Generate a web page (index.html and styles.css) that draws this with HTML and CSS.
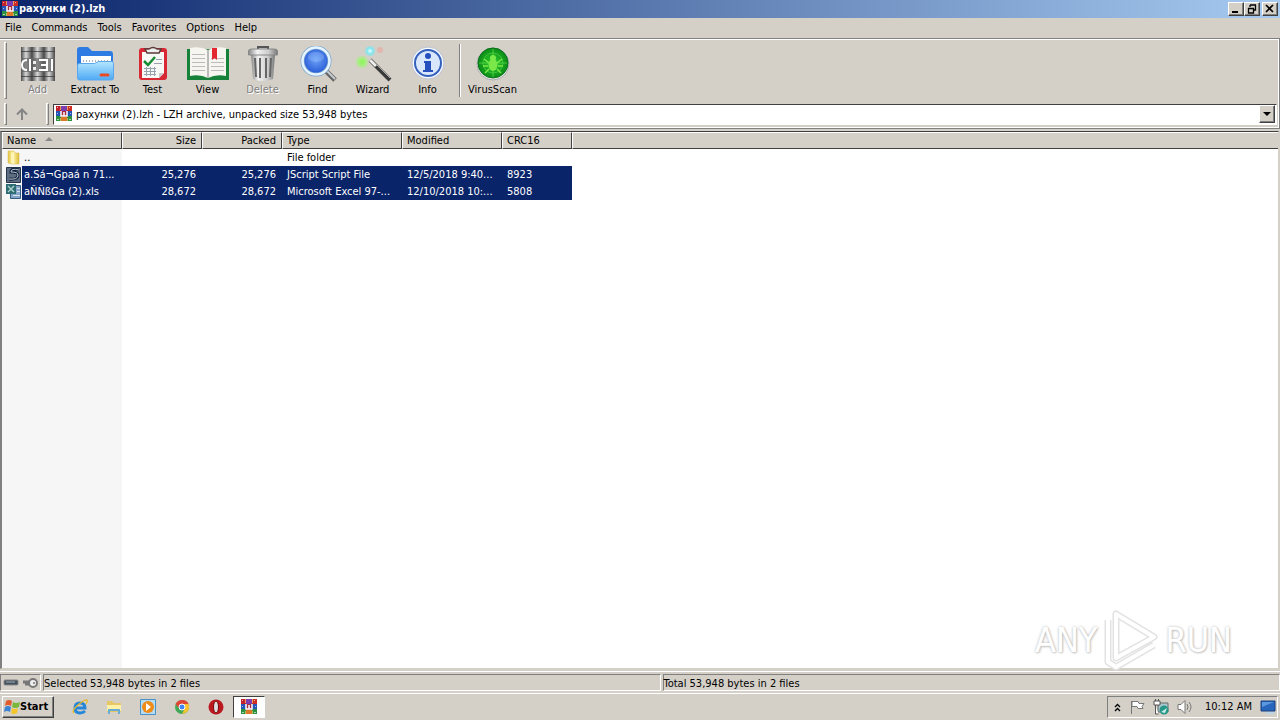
FILE: index.html
```html
<!DOCTYPE html>
<html lang="en">
<head>
<meta charset="utf-8">
<title>рахунки (2).lzh</title>
<link rel="stylesheet" href="styles.css">
</head>
<body>
<svg class="defs" aria-hidden="true">
  <defs>
    <linearGradient id="metal" x1="0" x2="1"><stop offset="0" stop-color="#4c4c4c"/><stop offset=".45" stop-color="#d8d8d8"/><stop offset="1" stop-color="#484848"/></linearGradient>
    <linearGradient id="steel" x1="0" x2="1"><stop offset="0" stop-color="#888"/><stop offset=".3" stop-color="#f2f2f2"/><stop offset=".7" stop-color="#ccc"/><stop offset="1" stop-color="#777"/></linearGradient>
    <linearGradient id="blue" x1="0" y1="0" x2="0" y2="1"><stop offset="0" stop-color="#b4e6ff"/><stop offset="1" stop-color="#4eaaf4"/></linearGradient>
    <linearGradient id="folder" x1="0" x2="1"><stop offset="0" stop-color="#e7c847"/><stop offset=".5" stop-color="#fff3a8"/><stop offset="1" stop-color="#dcb936"/></linearGradient>
    <radialGradient id="lens" cx=".5" cy=".45" r=".6"><stop offset="0" stop-color="#6ea2f8"/><stop offset="1" stop-color="#1b4fd0"/></radialGradient>
    <radialGradient id="scan"><stop offset="0" stop-color="#2fd12f"/><stop offset="1" stop-color="#0b8c17"/></radialGradient>
    <radialGradient id="glowg"><stop offset="0" stop-color="#8cf35a"/><stop offset=".5" stop-color="#a5f07c"/><stop offset="1" stop-color="#a5f07c" stop-opacity="0"/></radialGradient>
    <radialGradient id="glowb"><stop offset="0" stop-color="#eaffff"/><stop offset=".5" stop-color="#7fe6ee"/><stop offset="1" stop-color="#7fe6ee" stop-opacity="0"/></radialGradient>
    <symbol id="rar" viewBox="0 0 16 16">
      <path fill="#c4202c" d="M0 0h5v5H0z"/><path fill="#7d3bb0" d="M5 0h6v5H5z"/><path fill="#cc2c22" d="M11 0h5v5h-5z"/>
      <path fill="#2454b8" d="M0 5h5v5H0z"/><path fill="#a52c3c" d="M5 5h6v6H5z"/><path fill="#2454b8" d="M11 5h5v5h-5z"/>
      <path fill="#2b9140" d="M0 10h5v5H0z"/><path fill="#dd7829" d="M5 11h6v4H5z"/><path fill="#2b9140" d="M11 10h5v5h-5z"/>
      <path stroke="#fff" stroke-opacity=".6" d="M1 1.500h1M1 7.500h1M1 13.500h2M13 1.500h1M14 7.500h1M13 13.500h2"/>
      <path fill="none" stroke="#f2cf6d" stroke-opacity=".7" d="M4.500 0v4M11.500 0v4M4.500 12v3M11.500 12v3"/>
      <path fill="none" stroke="#fff" stroke-width="1.500" d="M5 5v5h6V5M8 6v4"/>
    </symbol>
  </defs>
</svg>
<div class="window">
  <header class="titlebar">
    <svg class="i16"><use href="#rar"/></svg>
    <h1>рахунки (2).lzh</h1>
    <div class="winbtns">
      <button aria-label="Minimize"><svg viewBox="0 0 12 10"><path d="M2 8h6" stroke="#000" stroke-width="2"/></svg></button>
      <button aria-label="Restore"><svg viewBox="0 0 12 10"><path d="M4 1h6M4 1v2M9.500 1v5H8M2 4.500h6M2.500 4v5h5V4" fill="none" stroke="#000" stroke-width="1.300"/></svg></button>
      <button class="close" aria-label="Close"><svg viewBox="0 0 12 10"><path d="M2 1l7 7M9 1L2 8" stroke="#000" stroke-width="1.700"/></svg></button>
    </div>
  </header>
  <nav class="menu">
    <button>File</button><button>Commands</button><button>Tools</button><button>Favorites</button><button>Options</button><button>Help</button>
  </nav>

  <div class="rebar">
    <div class="toolbar">
      <i class="grip"></i>
      <button class="tool" disabled>
        <svg viewBox="0 0 42 36"><rect x="4" y="1" width="11" height="34" fill="url(#metal)"/><rect x="15" y="1" width="12" height="34" fill="url(#metal)"/><rect x="27" y="1" width="11" height="34" fill="url(#metal)"/><path stroke="#333" stroke-width="1" opacity=".7" d="M4 5.500h34M4 30.500h34"/><path fill="#666" opacity=".7" d="M4 12h34v14H4z"/><path fill="none" stroke="#fff" stroke-width="2" d="M10 14q-5 0-5 5t5 5M13 13v12M22 14h8v10h-8M24 19h6M35 13v12"/><path fill="#eee" d="M16 15h3v3h-3zM16 21h3v3h-3z"/></svg>
        <span>Add</span></button>
      <button class="tool wide">
        <svg viewBox="0 0 42 36"><path fill="#2f7be4" d="M3 30V4q0-3 3-3h8l4 4h18q3 0 3 3v22z"/><path fill="#fff" d="M7 10h30v14H7z"/><path stroke="#a9b4c0" stroke-dasharray="1 2" stroke-width="2" d="M9 15h26"/><path fill="url(#blue)" stroke="#5aa6ef" d="M3.500 19.500q0-2 2-2h15l4-2h13q2 0 2 2V32q0 2-2 2h-32q-2 0-2-2z"/><path stroke="#e84b25" stroke-width="3" stroke-linecap="round" d="M27 29h7"/></svg>
        <span>Extract To</span></button>
      <button class="tool">
        <svg viewBox="0 0 42 36"><rect x="7" y="2" width="28" height="32" rx="3" fill="#d92835"/><path fill="#f7f7f5" d="M10 6h22v21l-5 5H10z"/><path fill="#c9cbd0" d="M27 32v-5h5z"/><path fill="#eee" stroke="#5b3a3a" stroke-width="1.500" d="M13 3h4q4-3 8 0h4l-2 4H15z"/><path fill="none" stroke="#168c35" stroke-width="2.500" d="M12 15l4 4 7-8"/><path stroke="#98a2ae" d="M24 13.500h6M22 17.500h8M12 22.500h12M12 25.500h12M12 28.500h12M14.500 21v9M18.500 21v9M22.500 21v9"/></svg>
        <span>Test</span></button>
      <button class="tool">
        <svg viewBox="0 0 42 36"><path fill="#168239" d="M0 3h42v31H0z"/><path fill="#f6f5ef" d="M3 2q10-2 18 2 8-4 18-2v28q-10-2-18 2-8-4-18-2z"/><path stroke="#bbb" stroke-width="2" d="M21 4v28"/><path stroke="#bbb" d="M5 8.500h13M5 12.500h13M5 16.500h13M5 20.500h13M5 24.500h13M24 12.500h13M24 16.500h13M24 20.500h13M24 24.500h13"/><path fill="#e32632" d="M25 2h5v12l-2.500-2-2.500 2z"/></svg>
        <span>View</span></button>
      <button class="tool" disabled>
        <svg viewBox="0 0 42 36"><path fill="none" stroke="#555" stroke-width="2" d="M16 3V1h10v2"/><path fill="url(#steel)" d="M9 9h24l-2 24q-10 4-20 0z"/><path fill="url(#steel)" stroke="#888" d="M6.500 5q0-2 3-2h23q3 0 3 2v4h-29z"/><path stroke="#666" stroke-width="2" d="M13 12l1 19M18 12v20M24 12v20M29 12l-1 19"/></svg>
        <span>Delete</span></button>
      <button class="tool">
        <svg viewBox="0 0 42 36"><path stroke="#666" stroke-width="5" d="M28 24l10 10"/><path stroke="#c7cdd2" stroke-width="2" d="M29 24l9 9"/><circle cx="19" cy="15" r="13.500" fill="url(#lens)" stroke="#7aa6cc" stroke-width="4"/><circle cx="19" cy="15" r="13.500" fill="none" stroke="#e6f4ff" stroke-width="2.500"/><ellipse cx="19" cy="11" rx="8" ry="5" fill="#a5ccff" opacity=".3"/></svg>
        <span>Find</span></button>
      <button class="tool">
        <svg viewBox="0 0 42 36"><circle cx="10" cy="16" r="7" fill="url(#glowg)"/><circle cx="18" cy="5" r="6" fill="url(#glowb)"/><circle cx="28" cy="4" r="3" fill="#f09b91" opacity=".5"/><path stroke="#3a3a3a" stroke-width="4" d="M18 14l20 20"/><path stroke="#eee" stroke-width="3" d="M18 14l6 6"/><path stroke="#aaa" stroke-width="1" d="M25 19l13 13"/></svg>
        <span>Wizard</span></button>
      <button class="tool">
        <svg viewBox="0 0 42 36"><circle cx="21" cy="17" r="16" fill="#f6f9ff" stroke="#bcc3d2"/><circle cx="21" cy="17" r="13" fill="#d9e7fc" stroke="#3561bd" stroke-width="2"/><circle cx="21" cy="10" r="3" fill="#244fbd"/><path fill="#244fbd" d="M17 15h7v9h2v2H16v-2h2v-7h-1z"/></svg>
        <span>Info</span></button>
      <i class="sep"></i>
      <button class="tool">
        <svg viewBox="0 0 42 36"><circle cx="21" cy="18" r="16" fill="#eee" stroke="#aaa"/><circle cx="21" cy="17" r="15" fill="url(#scan)" stroke="#08711a"/><path fill="none" stroke="#62e04f" opacity=".7" d="M21 3v28M7 17h28"/><circle cx="21" cy="17" r="10" fill="none" stroke="#62e04f" opacity=".5"/><ellipse cx="21" cy="19" rx="4.500" ry="6" fill="#7be84a"/><circle cx="21" cy="12" r="3" fill="#7be84a"/><path fill="none" stroke="#7be84a" stroke-width="1.500" d="M17 17l-5-4M16 20h-5M17 23l-4 4M25 17l5-4M26 20h5M25 23l4 4"/></svg>
        <span>VirusScan</span></button>
    </div>
    <div class="address">
      <i class="grip"></i>
      <button class="up" aria-label="Up one level"><svg viewBox="0 0 12 12"><path fill="none" stroke="#858585" stroke-width="2" d="M6 12V2M1 6.500l5-5 5 5"/></svg></button>
      <i class="grip"></i>
      <div class="combo">
        <svg class="i16"><use href="#rar"/></svg>
        <input type="text" aria-label="Archive path" value="рахунки (2).lzh - LZH archive, unpacked size 53,948 bytes">
        <button aria-label="Show list"><svg viewBox="0 0 8 4"><path d="M0 0h8L4 4z"/></svg></button>
      </div>
    </div>
  </div>

  <main class="list">
    <table>
      <colgroup><col class="c-name"><col class="c-num"><col class="c-num"><col class="c-type"><col class="c-mod"><col class="c-crc"><col></colgroup>
      <thead><tr><th>Name<svg class="sort" viewBox="0 0 8 4"><path fill="#888" d="M0 4h8L4 0z"/></svg></th><th class="num">Size</th><th class="num">Packed</th><th>Type</th><th>Modified</th><th>CRC16</th><th></th></tr></thead>
      <tbody>
        <tr><td class="name"><div><svg class="i16" viewBox="0 0 16 16"><path fill="url(#folder)" stroke="#d2b54b" stroke-width=".5" d="M2 1h6l1 2h4v11H6l-4-1z"/><path fill="#fff5b8" d="M5 3l3-1v12l-3-1z"/></svg><span>..</span></div></td><td></td><td></td><td>File folder</td><td></td><td></td><td></td></tr>
        <tr class="sel"><td class="name"><div><svg class="i16" viewBox="0 0 16 16"><path fill="#5f6d80" stroke="#23354f" d="M.5.5h14v15H.5z"/><path fill="none" stroke="#142440" stroke-width="3" d="M13 3Q5 1 5 5q7 0 7 3 0 5-9 4"/><path fill="none" stroke="#b9c6cf" d="M13 3Q5 1 5 5q7 0 7 3 0 5-9 4"/></svg><span>a.Sá¬Gpaá n 71...</span></div></td><td class="num">25,276</td><td class="num">25,276</td><td>JScript Script File</td><td>12/5/2018 9:40...</td><td>8923</td><td></td></tr>
        <tr class="sel"><td class="name"><div><svg class="i16" viewBox="0 0 16 16"><path fill="#86a5c6" stroke="#315b83" d="M4.500 1.500h10v13h-10z"/><path fill="#2d6c73" d="M0 0h10v10H0z"/><path stroke="#a9cdc9" stroke-width="1.500" d="M2 2l6 6M8 2L2 8"/><path stroke="#d4e2f0" d="M11 4.500h3M11 7.500h3M7 11.500h7"/></svg><span>aÑÑßGa (2).xls</span></div></td><td class="num">28,672</td><td class="num">28,672</td><td>Microsoft Excel 97-...</td><td>12/10/2018 10:...</td><td>5808</td><td></td></tr>
      </tbody>
    </table>
    <div class="watermark"><span>ANY</span>
      <svg viewBox="0 0 60 64"><g fill="none" stroke-linejoin="round"><path stroke="#e2e2e2" stroke-width="7" d="M15 6v44l38-21zM7 12v42l8 5 38-22"/><path stroke="#fff" stroke-width="4" d="M15 6v44l38-21zM7 12v42l8 5 38-22"/></g></svg>
      <span>RUN</span></div>
  </main>

  <footer class="status">
    <div class="pane icons"><svg viewBox="0 0 36 12"><rect x="1" y="3" width="14" height="5" rx="1" fill="#42505c" stroke="#888"/><path stroke="#a5b0b9" d="M3 5h9"/><path fill="none" stroke="#777" stroke-width="3" d="M20 5h6M22 7h5"/><circle cx="30" cy="6" r="4" fill="#eee" stroke="#777" stroke-width="2"/><circle cx="31" cy="6" r="1" fill="#777"/></svg></div>
    <div class="pane">Selected 53,948 bytes in 2 files</div>
    <div class="pane">Total 53,948 bytes in 2 files</div>
  </footer>
</div>

<div class="taskbar">
  <button class="start"><svg class="i16" viewBox="0 0 16 16"><path fill="#e35a2c" d="M2 2q3-2 6 0L7 7Q4 5 1 7z"/><path fill="#79b83b" d="M9 3q3 2 7 0l-1 5q-4 2-7 0z"/><path fill="#3b83d3" d="M1 8q3-2 6 0l-1 5q-3-2-6 0z"/><path fill="#f6c52c" d="M8 9q3 2 6 0l-1 5q-3 2-6 0z"/></svg>Start</button>
  <div class="quick">
    <button aria-label="Internet Explorer"><svg class="i16" viewBox="0 0 16 16"><path fill="none" stroke="#2686d8" stroke-width="3" d="M3 9h10Q13 4 8 4T3 9t5 5q3 0 5-2"/><path fill="none" stroke="#e7b72b" stroke-width="1.300" d="M2 14Q-1 12 6 6t9-5q1 1-1 4"/></svg></button>
    <button aria-label="Explorer"><svg class="i16" viewBox="0 0 16 16"><path fill="#e7c765" d="M1 2h5l2 2h7v9H1z"/><path fill="#fff2a8" d="M1 6h14v6H1z"/><path fill="none" stroke="#68add3" stroke-width="2" d="M3 15v-4h10v4"/></svg></button>
    <button aria-label="Media Player"><svg class="i16" viewBox="0 0 16 16"><path fill="#b5dcf3" stroke="#4b91c3" d="M.5.5h15v15H.5z"/><circle cx="8" cy="8" r="6" fill="#ef8c18"/><path fill="#fff" d="M6 4l5 4-5 4z"/></svg></button>
    <button aria-label="Chrome"><svg class="i16" viewBox="0 0 16 16"><circle cx="8" cy="8" r="7" fill="#43a853"/><path fill="#e04435" d="M1.500 5Q4 1 8 1q5 0 6.500 4H8L5 9z"/><path fill="#f9c32d" d="M8 5h6.500Q17 13 8 15l3-6z"/><circle cx="8" cy="8" r="3" fill="#4285f4" stroke="#fff"/></svg></button>
    <button aria-label="Opera"><svg class="i16" viewBox="0 0 16 16"><circle cx="8" cy="8" r="7.500" fill="#bb1820"/><ellipse cx="8" cy="8" rx="2.500" ry="6" fill="#ddd" stroke="#78050b"/></svg></button>
    <button class="active" aria-label="WinRAR"><svg class="i16"><use href="#rar"/></svg></button>
  </div>
  <div class="tray">
    <svg class="chev" viewBox="0 0 7 9"><path fill="none" stroke="#000" stroke-width="1.300" d="M1 4l2.500-2.500L6 4M1 8l2.500-2.500L6 8"/></svg>
    <svg class="i16" viewBox="0 0 16 16"><path fill="#fff" stroke="#777" d="M2.500 15V2M3 2.500h6l1 2h5l-2 3 1 2H9l-1-2H3z"/></svg>
    <svg class="i16" viewBox="0 0 16 16"><path fill="#a8c9cf" stroke="#666" d="M5 4h10v9H5z"/><path fill="#fff" stroke="#555" d="M1 2h6v4H1zM2.500 6v9h3"/><path stroke="#555" d="M2.500 0v2M5.500 0v2"/><circle cx="11" cy="11" r="4.500" fill="#269688"/><path fill="#c9eee5" d="M8 13l6-4-2 5z"/></svg>
    <svg class="i16" viewBox="0 0 16 16"><path fill="#fff" stroke="#777" d="M1 5.500h3l4-4v13l-4-4H1z"/><path fill="none" stroke="#777" d="M10 5q2 3 0 6M12 3q4 5 0 10"/></svg>
    <time>10:12 AM</time>
    <svg class="i16" viewBox="0 0 16 16"><path fill="#2865bc" stroke="#173f7e" d="M1 2h14v10H1z"/><path fill="#5c98dd" d="M2 3h12L2 8z"/><path stroke="#bcd2e7" stroke-width="2" d="M6 14h8"/></svg>
  </div>
</div>
</body>
</html>
```

FILE: styles.css
```css
* { box-sizing: border-box; }
html, body { height: 100%; }
body {
  margin: 0;
  display: flex;
  flex-direction: column;
  background: #d4d0c8;
  color: #000;
  font: 11px/14px "DejaVu Sans Condensed", Tahoma, sans-serif;
  overflow: hidden;
}
button, input { font: inherit; color: inherit; margin: 0; padding: 0; border: 0; background: none; }
svg { display: block; flex: none; }
.defs { position: absolute; width: 0; height: 0; }
.i16 { width: 16px; height: 16px; }
.window { flex: 1; min-height: 0; display: flex; flex-direction: column; }

.titlebar { height: 18px; padding: 0 2px; display: flex; align-items: center; gap: 1px; background: linear-gradient(90deg, #0a246a, #a6caf0); }
.titlebar h1 { margin: 0; color: #fff; font-size: 11px; font-weight: bold; }
.winbtns { display: flex; margin-left: auto; }
.winbtns button, .combo button, .start { background: #d4d0c8; border: 1px solid; border-color: #fff #404040 #404040 #fff; box-shadow: inset -1px -1px #808080; }
.winbtns button { width: 16px; height: 14px; padding: 1px; }
.winbtns svg { width: 12px; height: 10px; }
.winbtns .close { margin-left: 2px; }

.menu { height: 20px; display: flex; align-items: center; }
.menu button { padding: 0 5px; }

.rebar { border: solid #808080; border-width: 1px 1px 1px 0; box-shadow: inset 0 1px #fff, inset -1px -1px #fff; }
.grip { flex: none; width: 3px; border: 1px solid; border-color: #fff #808080 #808080 #fff; }
.toolbar { display: flex; padding: 3px 4px 0; height: 63px; }
.toolbar .grip { height: 57px; }
.tool { min-width: 55px; display: flex; flex-direction: column; align-items: center; padding-top: 4px; }
.tool:first-of-type { margin-left: 3px; }
.tool.wide { min-width: 60px; }
.tool svg { width: 42px; height: 36px; }
.tool span { margin-top: 1px; }
.tool:disabled { color: #808080; text-shadow: 1px 1px #fff; }
.sep { width: 2px; height: 53px; margin: 2px 4px 0; border-left: 1px solid #808080; border-right: 1px solid #fff; }
.address { display: flex; align-items: center; height: 26px; padding: 0 2px 2px 4px; }
.address .grip { height: 22px; }
.up { width: 30px; display: flex; justify-content: center; margin-right: 9px; }
.up svg { width: 12px; height: 12px; }
.combo { flex: 1; height: 21px; margin-left: 4px; padding: 1px; display: flex; align-items: center; background: #fff; border: 1px solid; border-color: #404040 #fff #fff #404040; }
.combo .i16 { margin: 0 4px 0 1px; }
.combo input { flex: 1; min-width: 0; padding-top: 2px; outline: 0; }
.combo button { width: 16px; height: 18px; display: flex; align-items: center; justify-content: center; }
.combo button svg { width: 8px; height: 4px; }

.list {
  flex: 1; min-height: 0; position: relative; margin: 2px 1px 2px 0;
  border: 1px solid; border-color: #404040 #d4d0c8 #d4d0c8 #808080; border-left-width: 2px;
  background: linear-gradient(90deg, #f6f6f6 120px, #fff 120px);
}
table { width: 100%; table-layout: fixed; border-collapse: separate; border-spacing: 0; }
.c-name, .c-type { width: 120px; }
.c-num { width: 80px; }
.c-mod { width: 100px; }
.c-crc { width: 70px; }
th, td { height: 17px; padding: 0 5px; text-align: left; font-weight: normal; white-space: nowrap; overflow: hidden; }
th { padding-left: 4px; background: #d4d0c8; border: solid; border-width: 1px; border-color: #fff #404040 #404040 #fff; }
th:last-child { border-right: 0; }
.num { text-align: right; }
td.num { padding-right: 6px; }
.sort { display: inline-block; width: 8px; height: 4px; margin: 0 0 3px 9px; }
td.name { padding: 0 0 0 4px; }
.name div { display: flex; align-items: center; height: 17px; }
.name span { flex: 1; padding-left: 2px; line-height: 17px; }
.sel td:not(:last-child):not(.name), .sel .name span { background: #0a246a; color: #fff; }

.watermark { position: absolute; right: 46px; bottom: -4px; display: flex; align-items: center; color: #fff; font: 34px/44px "DejaVu Sans Condensed", sans-serif; text-shadow: 0 0 3px #bbb, 1px 1px 2px #ccc; }
.watermark svg { width: 60px; height: 64px; margin: 0 4px; }

.status { display: flex; height: 22px; padding: 2px 0; border-top: 1px solid #fff; gap: 2px; }
.pane { flex: 1; padding: 1px 0; line-height: 15px; border: 1px solid; border-color: #808080 #fff #fff #808080; white-space: nowrap; }
.pane.icons { flex: 0 0 41px; padding-left: 2px; }
.icons svg { width: 36px; height: 12px; margin-top: 1px; }

.taskbar { height: 27px; padding: 2px; border-top: 1px solid #fff; display: flex; align-items: center; }
.start { width: 52px; height: 22px; display: flex; align-items: center; padding: 0 1px; font-weight: bold; }
.quick { display: flex; margin-left: 9px; }
.quick button { width: 34px; height: 22px; display: flex; align-items: center; justify-content: center; }
.quick .active { width: 32px; background: #fff; border: 1px solid; border-color: #404040 #fff #fff #404040; }
.tray { height: 22px; margin-left: auto; padding: 0 1px 0 6px; display: flex; align-items: center; gap: 8px; border: 1px solid; border-color: #808080 #fff #fff #808080; }
.chev { width: 7px; height: 9px; }
.tray time { margin-left: 4px; }
```
